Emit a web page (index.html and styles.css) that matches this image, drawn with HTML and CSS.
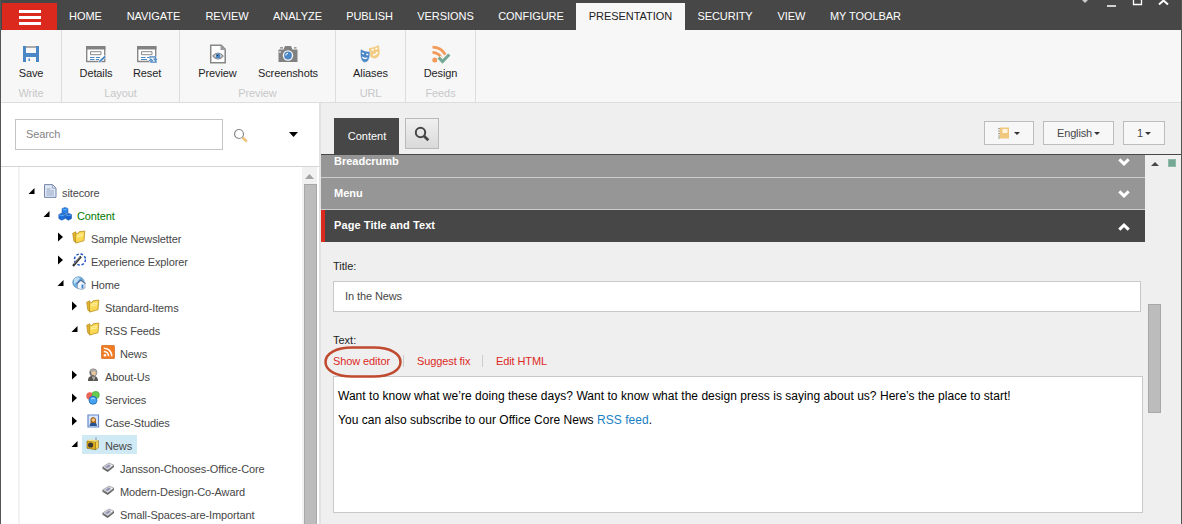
FILE: index.html
```html
<!DOCTYPE html>
<html lang="en">
<head>
<meta charset="utf-8">
<title>Content Editor</title>
<link rel="stylesheet" href="styles.css">
</head>
<body>
<svg class="defs" width="0" height="0" aria-hidden="true">
  <symbol id="closed" viewBox="0 0 7 10"><path d="M1 0.500 6 5 1 9.500z" fill="#000"/></symbol>
  <symbol id="open" viewBox="0 0 7 10"><path d="M6.500 2v6H.500z" fill="#000"/></symbol>
  <symbol id="folder" viewBox="0 0 14 14"><path d="M.7 3.200 4 1.800v11L1.800 11z" fill="#e8b72c" stroke="#b58a20" stroke-width=".7"/><path d="M3.200 4 6 3.600l1-1.800 5.800-.8-.8 9.700-8.300 2.400z" fill="#fbd852" stroke="#b98f22" stroke-width=".8"/><path d="M5 5.200 11.400 4M5 7l6-1.200" stroke="#fff3a8"/></symbol>
  <symbol id="note" viewBox="0 0 14 14"><path d="M1.500 7 8 3l5 2.200-6.200 5z" fill="#d5d5dc" stroke="#888" stroke-width=".6"/><path d="M1.500 7v1.800l5.200 3.300L13 7V5.200L6.800 10z" fill="#666"/><path d="m4 7 4-2.500 2 1L6.500 8z" fill="#9292b5"/><path d="m9.500 5 1.500.7" stroke="#fff"/></symbol>
  <symbol id="chev" viewBox="0 0 12 8"><path d="m1.300 1.300 4.700 4.500 4.700-4.500" fill="none" stroke="#fff" stroke-width="3"/></symbol>
</svg>
<div class="window">
  <header class="nav">
    <div class="burger"><i></i><i></i><i></i></div>
    <span>HOME</span><span>NAVIGATE</span><span>REVIEW</span><span>ANALYZE</span><span>PUBLISH</span><span>VERSIONS</span><span>CONFIGURE</span><span class="active">PRESENTATION</span><span>SECURITY</span><span>VIEW</span><span>MY TOOLBAR</span>
    <svg class="winctl" width="96" height="8" viewBox="0 0 96 8"><path d="M5 0h6L8 3z" fill="#ccc"/><path d="M30 6h9M56.500 0v4.500h8V0" stroke="#fff" stroke-width="1.300" fill="none"/><path d="m82 4.500 4.500-4 4.500 4" stroke="#fff" stroke-width="2" fill="none"/></svg>
  </header>
  <div class="ribbon">
    <section class="group g-write">
      <div class="tools"><div class="tool"><svg width="20" height="20" viewBox="0 0 20 20"><path d="M2 2h16v16H2z" fill="#4b87c5"/><path d="M5 2h10v7H5z" fill="#f7f7f7"/><path d="M5 2h10v2H5z" fill="#aaa"/><path d="M5 13h10v5H5z" fill="#f7f7f7"/><path d="M7.500 14.500h1.500V17H7.500z" fill="#4b87c5"/></svg><b>Save</b></div></div>
      <em>Write</em>
    </section>
    <section class="group g-layout">
      <div class="tools"><div class="tool t-details"><svg width="22" height="20" viewBox="0 0 22 20"><path d="M1.700 3h18v14.500h-18z" fill="#fff" stroke="#888" stroke-width="1.400"/><path d="M1 2h19.400v3.500H1z" fill="#828282"/><path d="M5.500 7.700h10.500v3H5.500z" fill="#fff" stroke="#888"/><path d="M5 13.500h4.500M11 13.500h4M5 15.500h4.500M11 15.500h3" stroke="#4b87c5" stroke-width="1.200"/><path d="m13 19 1-2.500 5.500-5 1.700 1.600-5.600 5z" fill="#4b87c5" stroke="#f7f7f7" stroke-width=".6"/></svg><b>Details</b></div><div class="tool t-reset"><svg width="22" height="20" viewBox="0 0 22 20"><path d="M1.700 3h18v14.500h-18z" fill="#fff" stroke="#888" stroke-width="1.400"/><path d="M1 2h19.400v3.500H1z" fill="#828282"/><path d="M5.500 7.700h10.500v3H5.500z" fill="#fff" stroke="#888"/><path d="M5 13.500h4.500M11 13.500h2M5 15.500h6" stroke="#4b87c5" stroke-width="1.200"/><circle cx="17" cy="15.500" r="4.300" fill="#f7f7f7"/><path d="M14 14.500v-1.700h5.300v3M20 16.500v1.700h-5v-2.500" fill="none" stroke="#4b87c5" stroke-width="1.300"/><path d="m17.500 14.700 1.800 1.800 1.800-1.800M13.200 17l1.800-1.800 1.800 1.800" fill="none" stroke="#4b87c5" stroke-width="1.100"/></svg><b>Reset</b></div></div>
      <em>Layout</em>
    </section>
    <section class="group g-preview">
      <div class="tools"><div class="tool t-preview"><svg width="20" height="20" viewBox="0 0 20 20"><path d="M2.700 1.300h10.500l4 4v13.500H2.700z" fill="#fff" stroke="#878787" stroke-width="1.500"/><path d="M12.500 1v5H17z" fill="#999"/><path d="M5 12q5-6 10 0-5 6-10 0z" fill="#fff" stroke="#888" stroke-width="1.200"/><circle cx="10" cy="12" r="2.500" fill="#4b87c5"/><circle cx="9.500" cy="11.500" r=".8" fill="#333"/></svg><b>Preview</b></div><div class="tool t-shots"><svg width="22" height="20" viewBox="0 0 22 20"><path d="M1.500 5.500h5L8 2h6l1.500 3.500h5V18h-19z" fill="#818181"/><path d="M3 3.800h3M17 3.800h2.500" stroke="#818181" stroke-width="1.300"/><path d="M2 8h2" stroke="#fff"/><circle cx="11" cy="11.500" r="5.200" fill="#f7f7f7"/><circle cx="11" cy="11.500" r="3.900" fill="#4b87c5"/><path d="M8.800 11.500a2.200 2.200 0 0 1 2.200-2.200" stroke="#fff" fill="none"/></svg><b>Screenshots</b></div></div>
      <em>Preview</em>
    </section>
    <section class="group g-url">
      <div class="tools"><div class="tool"><svg width="22" height="20" viewBox="0 0 22 20"><path d="M10 4q5 .2 9.500-3 1.800 5 1 9-1.500 4.500-5.500 4.500-4-1-5-4.500z" fill="#f2cc82"/><path d="m12.500 6 2.300-.5M16.500 5l2-.8M14 11q3 0 4.500-3" stroke="#fff" stroke-width="1.400" fill="none"/><path d="M1.500 5q5 3 9.500 2.500.5 5-1.500 9-2.500 3-5.500 1.500-3.500-3-2.500-13z" fill="#4b87c5" stroke="#f7f7f7" stroke-width=".6"/><path d="m3 9 2 .8M7.300 10.500l2 0M3.300 13q2.500 2.500 5 .8" stroke="#fff" stroke-width="1.300" fill="none"/></svg><b>Aliases</b></div></div>
      <em>URL</em>
    </section>
    <section class="group g-feeds">
      <div class="tools"><div class="tool"><svg width="22" height="20" viewBox="0 0 22 20"><circle cx="4.800" cy="16" r="2.500" fill="#f39a58"/><path d="M2.500 8.300q6.500.2 9.500 6.500M2.500 3.200q8.500 0 13 7.500" fill="none" stroke="#f39a58" stroke-width="2.700"/><path d="m9 13.500 3.500 4 7.300-7.500" fill="none" stroke="#f7f7f7" stroke-width="5"/><path d="m8.700 13.500 3.800 4 6.800-7" fill="none" stroke="#74a895" stroke-width="3.200"/></svg><b>Design</b></div></div>
      <em>Feeds</em>
    </section>
  </div>
  <main class="main">
    <aside class="side">
      <div class="searchbar">
        <div class="search">Search</div>
        <svg class="mag" width="16" height="16" viewBox="0 0 16 16"><path d="m9.500 9.500 4.300 4" stroke="#eec37a" stroke-width="2.600"/><circle cx="6" cy="6" r="4.500" fill="#fff" stroke="#8b8b8b" stroke-width="1.200"/></svg>
        <svg class="drop" width="9" height="5" viewBox="0 0 9 5"><path d="M0 0h9L4.500 5z"/></svg>
      </div>
      <div class="treewrap">
        <ul class="tree">
          <li class="l0"><svg class="arr"><use href="#open"/></svg><span class="node"><svg class="ico" viewBox="0 0 14 14"><path d="M1.500.6h8l3.500 3.500v9.300H1.500z" fill="#dfe7f5" stroke="#7485a6"/><path d="M9.300.6v3.600H13M3.500 5h4M3.500 7h7.500M3.500 9h7.500M3.500 11h7.500" fill="none" stroke="#8498ba" stroke-width=".8"/></svg>sitecore</span></li>
          <li class="l1 green"><svg class="arr"><use href="#open"/></svg><span class="node"><svg class="ico" viewBox="0 0 14 14"><g stroke="#0b49a5" stroke-width=".5"><path d="m4 1.500 3-1 3 1v4l-3 1.500-3-1.500z" fill="#2b83e5"/><path d="m.8 7.500 3-1.500 3.200 1v4.500l-3.200 1.700-3-1.700z" fill="#1f70db"/><path d="m7.500 7.500 3-1.300 3 1.300v4l-3 1.700-3-1.700z" fill="#1763cd"/></g><path d="m4.300 1.800 2.700 1 2.700-1M1.200 7.700l2.600 1 3-1M8 7.700l2.500 1 2.700-1" fill="none" stroke="#82c7ff" stroke-width=".7"/></svg>Content</span></li>
          <li class="l2"><svg class="arr"><use href="#closed"/></svg><span class="node"><svg class="ico"><use href="#folder"/></svg>Sample Newsletter</span></li>
          <li class="l2"><svg class="arr"><use href="#closed"/></svg><span class="node"><svg class="ico" viewBox="0 0 14 14"><circle cx="8" cy="6.500" r="5.500" fill="none" stroke="#2456c4" stroke-width="1.500" stroke-dasharray="2.600 1.700"/><path d="m1 13 8-9.500" stroke="#333" stroke-width="2.200"/><path d="m2 11 6-7" stroke="#bbb" stroke-width=".6"/></svg>Experience Explorer</span></li>
          <li class="l2"><svg class="arr"><use href="#open"/></svg><span class="node"><svg class="ico" viewBox="0 0 14 14"><circle cx="6.500" cy="6.500" r="5.700" fill="#72b2e3" stroke="#4a83b5" stroke-width=".7"/><path d="M2 3q3-3 6-1L5 6 2 8z" fill="#bedff6"/><path d="M5.500 7.500v5l4.500 1 3-1.500V7L9.500 4z" fill="#f1f4fa" stroke="#8293ad" stroke-width=".7"/><path d="M4.500 8 8.500 4l5 3.500" fill="none" stroke="#56739c" stroke-width="1.200"/><path d="M9.500 8.500h2v4h-2z" fill="#4488cd"/></svg>Home</span></li>
          <li class="l3"><svg class="arr"><use href="#closed"/></svg><span class="node"><svg class="ico"><use href="#folder"/></svg>Standard-Items</span></li>
          <li class="l3"><svg class="arr"><use href="#open"/></svg><span class="node"><svg class="ico"><use href="#folder"/></svg>RSS Feeds</span></li>
          <li class="l4"><span class="node"><svg class="ico" viewBox="0 0 14 14"><rect x=".3" y=".3" width="13.400" height="13.400" rx="1.500" fill="#f17b22" stroke="#ca621b" stroke-width=".6"/><circle cx="4" cy="10.300" r="1.300" fill="#fff"/><path d="M2.800 6.500q4.500.2 4.800 4.800M2.800 3.200q7.500.2 8 8.100" fill="none" stroke="#fff" stroke-width="1.500"/></svg>News</span></li>
          <li class="l3"><svg class="arr"><use href="#closed"/></svg><span class="node"><svg class="ico" viewBox="0 0 14 14"><path d="M2 13q-.3-4 3-5h4q3 1 3 5z" fill="#58544f"/><path d="M5.500 8.500 8 13l1.500-4.500z" fill="#aaa"/><circle cx="7.300" cy="4.500" r="3.700" fill="#b3b1ab" stroke="#75716b" stroke-width=".6"/><path d="M6 4q2.500-1 3.500 0v2.500L7.500 8 6 6z" fill="#efc593"/><path d="M4.500 3.500v3.300l3.500 1" fill="none" stroke="#666"/></svg>About-Us</span></li>
          <li class="l3"><svg class="arr"><use href="#closed"/></svg><span class="node"><svg class="ico" viewBox="0 0 14 14"><circle cx="4" cy="5" r="3.700" fill="#ee6557"/><circle cx="9.700" cy="4" r="3.700" fill="#67cb4e" stroke="#409c34" stroke-width=".5"/><circle cx="7" cy="9.300" r="4" fill="#45a2ee" stroke="#1b65b6" stroke-width=".8"/><path d="M5 8q2-2 4 0" stroke="#bce4ff" fill="none"/></svg>Services</span></li>
          <li class="l3"><svg class="arr"><use href="#closed"/></svg><span class="node"><svg class="ico" viewBox="0 0 14 14"><path d="M2 1h10.500v12H2z" fill="#d9e8ff" stroke="#6687c9" stroke-width="1.200"/><path d="M3.500 12q0-3 2-3.500h3.500q2 .5 2 3.500z" fill="#28528f"/><path d="M4.500 9V5q2.500-4 5.500 0v4z" fill="#9a601b"/><circle cx="7.400" cy="6" r="1.800" fill="#f6c47d"/></svg>Case-Studies</span></li>
          <li class="l3"><svg class="arr"><use href="#open"/></svg><span class="node selected"><svg class="ico" viewBox="0 0 14 14"><path d="M10 4V.5" stroke="#888"/><path d="m1 4 8.500.7v8L1 11.300z" fill="#dfad18" stroke="#806210" stroke-width=".6"/><path d="M9.500 4.700 12.500 3.500v7.300l-3 2z" fill="#f5ce4d" stroke="#806210" stroke-width=".5"/><circle cx="4.600" cy="8" r="2.600" fill="#3a3936"/><path d="M1 3.700 4 2.500l8.500 1-3 1.200z" fill="#f5df73"/></svg>News</span></li>
          <li class="l4"><span class="node"><svg class="ico"><use href="#note"/></svg>Jansson-Chooses-Office-Core</span></li>
          <li class="l4"><span class="node"><svg class="ico"><use href="#note"/></svg>Modern-Design-Co-Award</span></li>
          <li class="l4"><span class="node"><svg class="ico"><use href="#note"/></svg>Small-Spaces-are-Important</span></li>
        </ul>
        <div class="treescroll"><svg width="9" height="5" viewBox="0 0 9 5"><path d="M4.500 0 9 5H0z" fill="#a3a3a3"/></svg><div class="thumb"></div></div>
      </div>
    </aside>
    <div class="editor">
      <div class="tabs">
        <div class="tab">Content</div>
        <div class="tabsearch"><svg width="16" height="16" viewBox="0 0 16 16"><circle cx="6.500" cy="6.500" r="4.700" fill="none" stroke="#474747" stroke-width="2"/><path d="m10 10 4.300 4.300" stroke="#474747" stroke-width="2.800"/></svg></div>
        <div class="btn b-book"><svg width="12" height="12" viewBox="0 0 12 12"><path d="M1.500.5H11v11H1.500z" fill="#f0c87d"/><path d="M4.500 2H9.500v4h-5z" fill="#fff4de"/><path d="M0 1.500h2M0 4h2M0 6.500h2M0 9h2M0 11h2" stroke="#999" stroke-width=".9"/></svg><i class="caret"></i></div>
        <div class="btn b-lang">English<i class="caret"></i></div>
        <div class="btn b-ver">1<i class="caret"></i></div>
      </div>
      <div class="body">
        <div class="form">
          <div class="sec s-first">Breadcrumb<svg width="12" height="8"><use href="#chev"/></svg></div>
          <div class="sec">Menu<svg width="12" height="8"><use href="#chev"/></svg></div>
          <div class="sec s-open">Page Title and Text<svg class="up" width="12" height="8"><use href="#chev"/></svg></div>
          <div class="fields">
            <div class="label">Title:</div>
            <div class="input">In the News</div>
            <div class="label l-text">Text:</div>
            <div class="links"><a class="k1">Show editor<svg class="ring" width="80" height="34" viewBox="0 0 80 34"><path d="M29 2.500h22C67 2.500 77.500 8.500 77.500 17S67 31.500 51 31.500H29C13 31.500 2.500 25.500 2.500 17S13 2.500 29 2.500z" fill="none" stroke="#c04a2f" stroke-width="2.500"/></svg></a><a class="k2">Suggest fix</a><a class="k3">Edit HTML</a></div>
            <div class="rich">
              <p class="p1">Want to know what we’re doing these days? Want to know what the design press is saying about us? Here’s the place to start!</p>
              <p class="p2">You can also subscribe to our Office Core News <a>RSS feed</a>.</p>
            </div>
          </div>
        </div>
        <div class="formscroll"><svg width="8" height="4" viewBox="0 0 8 4"><path d="M4 0 8 4H0z" fill="#474747"/></svg><div class="thumb"></div></div>
        <div class="flag"></div>
      </div>
    </div>
  </main>
</div>
</body>
</html>
```
FILE: styles.css
```css
* { box-sizing: border-box; }
body { margin: 0; overflow: hidden; font: 11px/14px "Liberation Sans", Arial, sans-serif; color: #474747; }
svg { display: block; flex: none; }
i, em { font-style: normal; }
b { font-weight: normal; }
.defs { position: absolute; }
.window { width: 1182px; height: 524px; border: solid #555; border-width: 0 1px; display: flex; flex-direction: column; background: #efefef; overflow: hidden; }

/* top navigation */
.nav { height: 30px; flex: none; padding: 3px 0 0 1px; background: #474747; color: #fff; display: grid; grid-template-columns: 55px 57px 79px 68px 73px 71px 81px 90px 109px 80px 53px 95px 1fr; }
.nav span { display: flex; align-items: center; justify-content: center; white-space: nowrap; letter-spacing: -.05px; padding-bottom: 1px; }
.nav .active { background: #f7f7f7; color: #222; }
.burger { background: #dc291e; display: flex; flex-direction: column; align-items: center; gap: 3px; padding-top: 7px; }
.burger i { width: 22px; height: 3px; background: #fff; }
.winctl { justify-self: end; margin: -3px 8px 0 0; }

/* ribbon */
.ribbon { height: 73px; flex: none; display: flex; background: #f7f7f7; border-bottom: 1px solid #ddd; color: #1e1e1e; letter-spacing: -.1px; }
.group { border-right: 1px solid #ddd; display: flex; flex-direction: column; align-items: center; padding-top: 14px; }
.tools { display: flex; }
.tool { display: flex; flex-direction: column; align-items: center; gap: 2px; }
.group em { margin-top: 6px; color: #c8c8c8; }
.g-write { width: 61px; }
.g-layout { width: 118px; }
.g-preview { width: 156px; }
.g-url, .g-feeds { width: 70px; }
.g-layout .tools { padding-left: 2px; }
.g-preview .tools { padding-right: 3px; }
.t-details, .t-reset { width: 51px; }
.t-preview { width: 64px; }
.t-shots { width: 77px; }

.main { flex: 1; min-height: 0; display: flex; }

/* content tree */
.side { width: 320px; flex: none; background: #fff; border-right: 2px solid #e2e2e2; display: flex; flex-direction: column; }
.searchbar { height: 64px; flex: none; border-bottom: 1px solid #d5d5d5; display: flex; align-items: center; padding: 0 0 1px 14px; }
.search { width: 208px; height: 31px; border: 1px solid #c4c4c4; padding: 7px 10px; color: #848484; letter-spacing: -.1px; }
.mag { margin-left: 10px; margin-top: 4px; }
.drop { margin-left: 40px; }
.treewrap { flex: 1; min-height: 0; overflow: hidden; display: flex; padding-right: 1px; }
.tree { list-style: none; width: 284px; margin: 0 0 0 17px; padding: 14px 0 0; border-left: 2px solid #f2f2f2; letter-spacing: -.12px; }
.tree li { height: 23px; display: flex; align-items: center; }
.l0 { padding-left: 8px; }
.l1 { padding-left: 23px; }
.l2 { padding-left: 37px; }
.l3 { padding-left: 51px; }
.l4 { padding-left: 77px; }
.arr { width: 7px; height: 10px; margin-bottom: 3px; }
.node { display: flex; align-items: center; height: 19px; margin: 0 0 2px 4px; padding: 2px 5px 0 4px; white-space: nowrap; }
.l4 .node { margin-left: 0; }
.ico { width: 14px; height: 14px; margin: 0 5px 3px 0; }
.green { color: #007a00; }
.selected { background: #d0eaf5; }
.treescroll { width: 15px; display: flex; flex-direction: column; align-items: center; padding-top: 7px; background: #f1f1f1; }
.treescroll .thumb { flex: 1; width: 13px; margin: 5px 0 0 2px; background: #bcbcbc; border: solid #a8a8a8; border-width: 1px 1px 0; }

/* editor */
.editor { flex: 1; min-width: 0; display: flex; flex-direction: column; }
.tabs { height: 52px; flex: none; border-bottom: 1px solid #474747; padding: 15px 16px 0 13px; display: flex; align-items: flex-start; }
.tab { width: 65px; height: 36px; background: #474747; color: #fff; display: flex; align-items: center; justify-content: center; padding-left: 1px; }
.tabsearch { width: 34px; height: 31px; margin-left: 6px; border: 1px solid #bababa; background: linear-gradient(#f0f0f0, #d9d9d9); display: flex; align-items: center; justify-content: center; }
.btn { height: 24px; margin-top: 3px; border: 1px solid #bcbcbc; background: #f7f7f7; display: flex; align-items: center; justify-content: center; gap: 2px; margin-left: 9px; letter-spacing: -.15px; }
.b-book { width: 50px; margin-left: auto; gap: 4px; }
.b-lang { width: 71px; }
.b-ver { width: 42px; }
.caret { width: 0; height: 0; border: 3px solid transparent; border-top-color: #333; border-bottom: 0; }
.body { flex: 1; min-height: 0; display: flex; }
.form { width: 824px; overflow: hidden; }
.sec { height: 32px; background: #969696; color: #fff; font-weight: bold; border-bottom: 1px solid #ccc; padding: 0 15px 2px 13px; display: flex; align-items: center; justify-content: space-between; }
.sec svg { margin-top: 3px; }
.s-first { height: 23px; padding-bottom: 11px; }
.s-open { background: #474747; border-left: 4px solid #dc291e; border-bottom: 0; padding-left: 9px; padding-bottom: 2px; letter-spacing: .1px; }
.up { transform: rotate(180deg); }
.fields { padding: 17px 0 0 12px; color: #1e1e1e; }
.input { width: 808px; height: 31px; border: 1px solid #c8c8c8; background: #fff; margin-top: 8px; padding: 7px 11px; color: #474747; letter-spacing: -.1px; }
.l-text { margin-top: 21px; }
.links { display: flex; height: 12px; margin-top: 8px; line-height: 12px; color: #dc291e; white-space: nowrap; letter-spacing: -.1px; }
.links a { position: relative; }
.links .k1 { width: 71px; border-right: 1px solid #ccc; }
.links .k2 { width: 79px; padding-left: 13px; border-right: 1px solid #ccc; }
.links .k3 { padding-left: 13px; }
.ring { position: absolute; left: -10px; top: -10px; z-index: 1; }
.rich { width: 810px; height: 137px; margin-top: 9px; border: 1px solid #c8c8c8; background: #fff; color: #000; padding: 12px 4px; font-size: 12px; line-height: 14px; white-space: nowrap; letter-spacing: .033px; }
.rich p { margin: 0 0 10px; }
.rich a { color: #1a80c4; }
.formscroll { width: 20px; display: flex; flex-direction: column; align-items: center; padding-top: 7px; }
.formscroll .thumb { width: 13px; height: 109px; margin: 138px 1px 0 0; background: #bcbcbc; border: 1px solid #a8a8a8; }
.flag { width: 8px; height: 8px; margin: 4px 0 0 3px; background: #74a895; border: 1px solid #8fb9a9; }
```
